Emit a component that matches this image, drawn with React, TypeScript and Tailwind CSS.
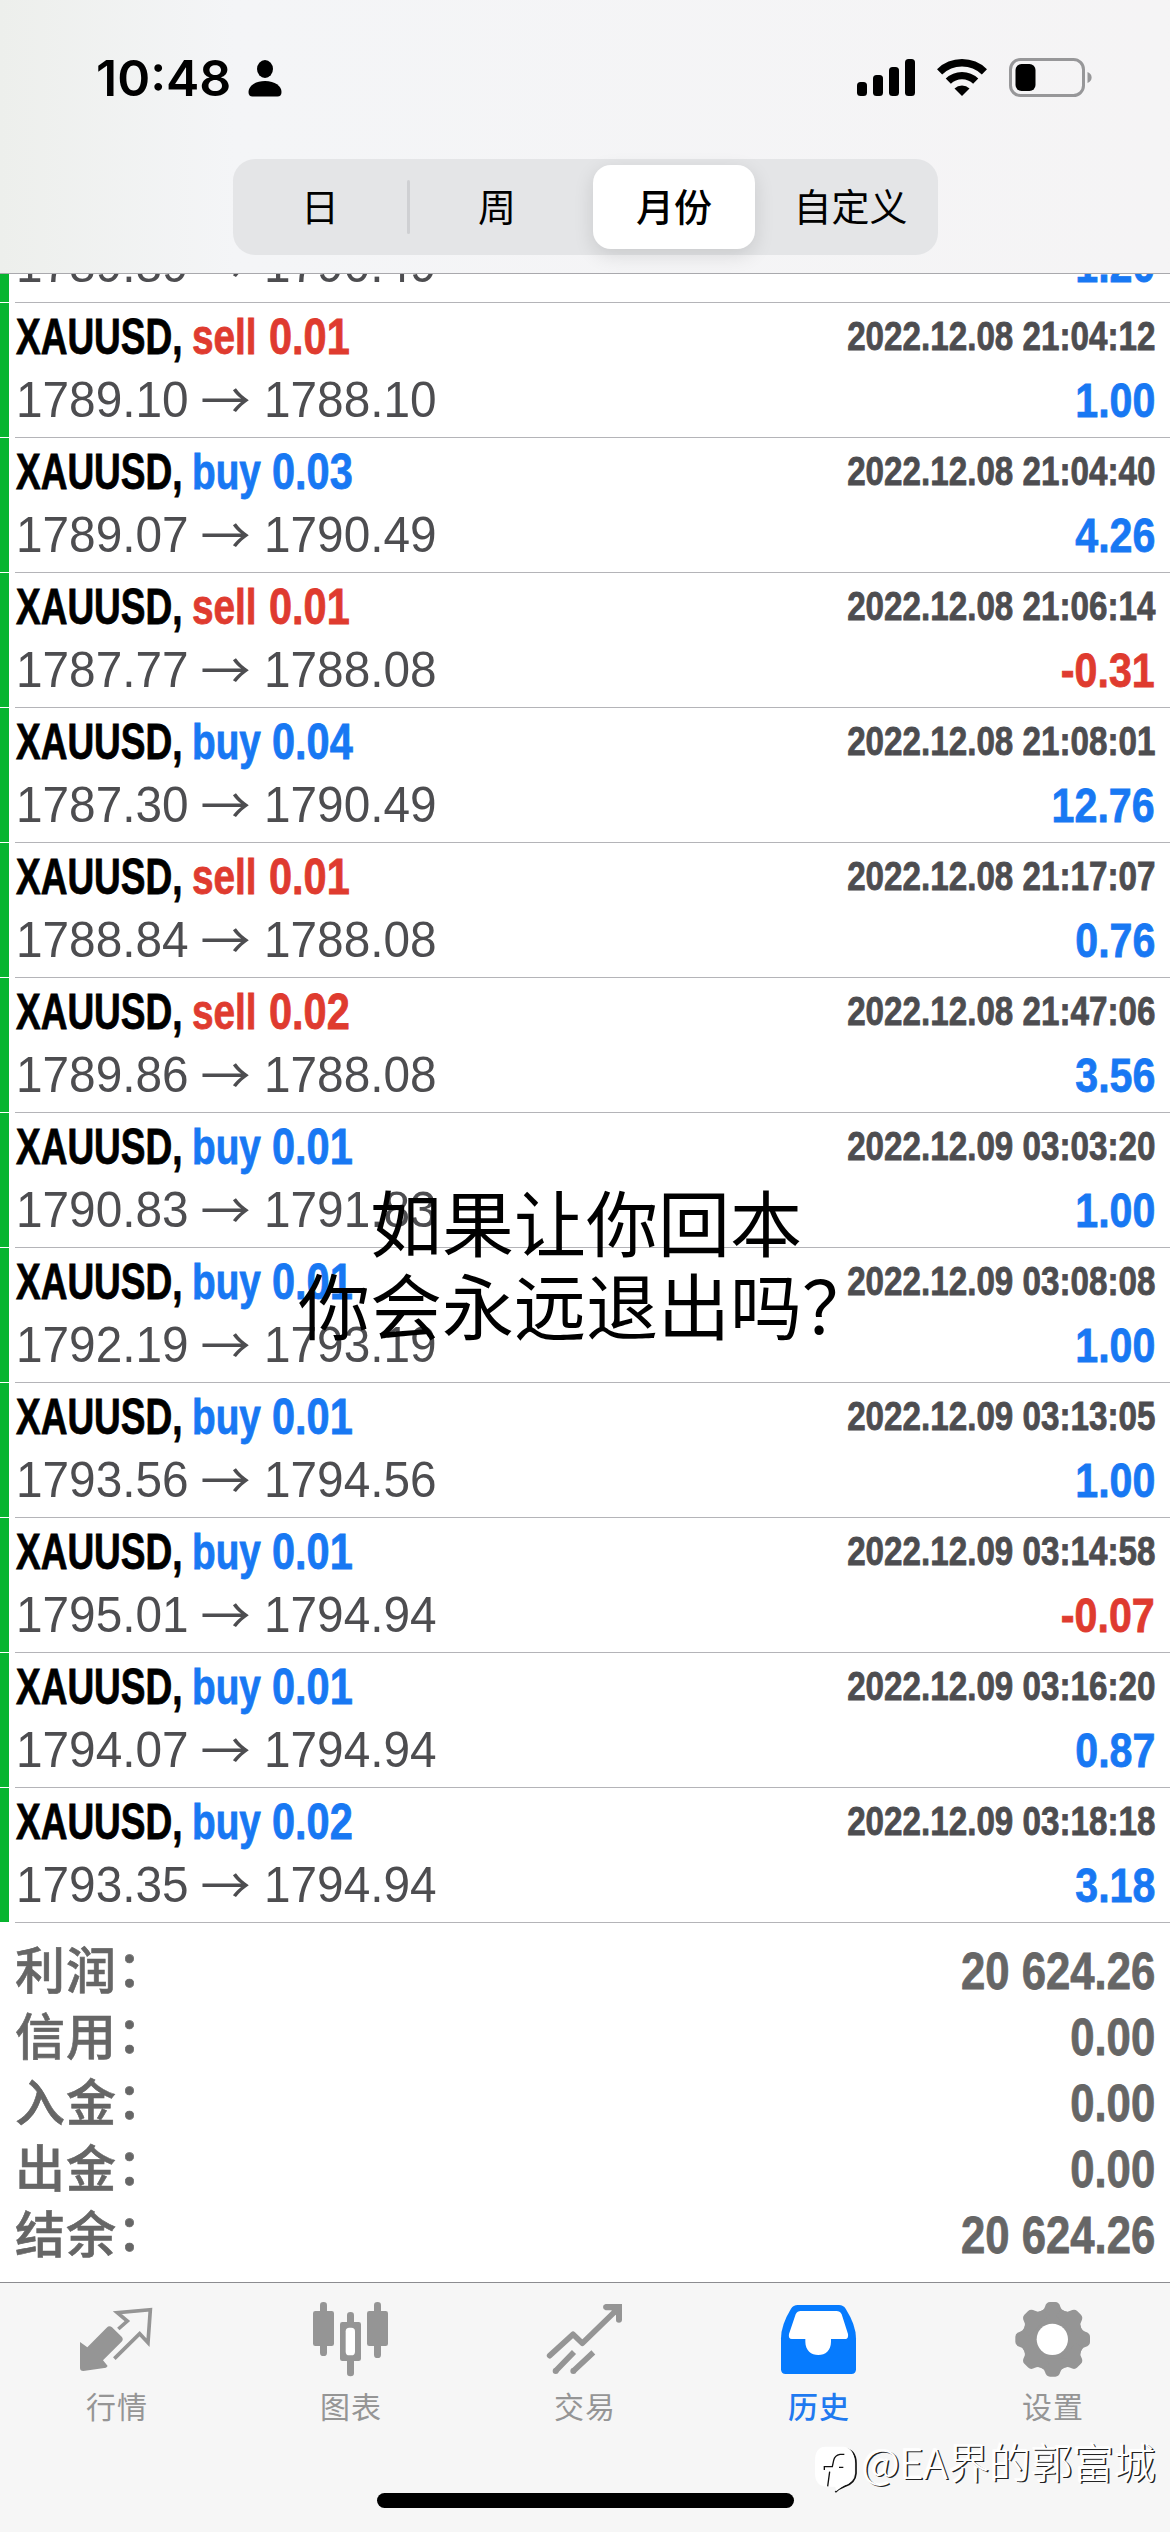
import React from "react";

type Trade = {
  side: "sell" | "buy";
  lot: string;
  from: string;
  to: string;
  time: string;
  profit: string;
};

const trades: Trade[] = [
  { side: "sell", lot: "0.01", from: "1789.10", to: "1788.10", time: "2022.12.08 21:04:12", profit: "1.00" },
  { side: "buy", lot: "0.03", from: "1789.07", to: "1790.49", time: "2022.12.08 21:04:40", profit: "4.26" },
  { side: "sell", lot: "0.01", from: "1787.77", to: "1788.08", time: "2022.12.08 21:06:14", profit: "-0.31" },
  { side: "buy", lot: "0.04", from: "1787.30", to: "1790.49", time: "2022.12.08 21:08:01", profit: "12.76" },
  { side: "sell", lot: "0.01", from: "1788.84", to: "1788.08", time: "2022.12.08 21:17:07", profit: "0.76" },
  { side: "sell", lot: "0.02", from: "1789.86", to: "1788.08", time: "2022.12.08 21:47:06", profit: "3.56" },
  { side: "buy", lot: "0.01", from: "1790.83", to: "1791.83", time: "2022.12.09 03:03:20", profit: "1.00" },
  { side: "buy", lot: "0.01", from: "1792.19", to: "1793.19", time: "2022.12.09 03:08:08", profit: "1.00" },
  { side: "buy", lot: "0.01", from: "1793.56", to: "1794.56", time: "2022.12.09 03:13:05", profit: "1.00" },
  { side: "buy", lot: "0.01", from: "1795.01", to: "1794.94", time: "2022.12.09 03:14:58", profit: "-0.07" },
  { side: "buy", lot: "0.01", from: "1794.07", to: "1794.94", time: "2022.12.09 03:16:20", profit: "0.87" },
  { side: "buy", lot: "0.02", from: "1793.35", to: "1794.94", time: "2022.12.09 03:18:18", profit: "3.18" },
];

const totals = [
  ["利润", "20 624.26"],
  ["信用", "0.00"],
  ["入金", "0.00"],
  ["出金", "0.00"],
  ["结余", "20 624.26"],
];

function PriceLine({ from, to, profit }: { from: string; to: string; profit: string }) {
  return (
    <div className="flex h-[58px] whitespace-nowrap pl-[16px] pr-[15px] leading-[58px]">
      <span className="w-[180px] origin-left scale-x-[0.955] text-[50px] text-[#4d4d50]">{from}</span>
      <span className="flex w-[68px] justify-center pr-[9px] font-['Noto_Sans_CJK_SC',sans-serif] text-[50px] leading-[53px] text-[#4d4d50]">→</span>
      <span className="origin-left scale-x-[0.955] text-[50px] text-[#4d4d50]">{to}</span>
      <span
        className={
          "ml-auto origin-right scale-x-[0.84] text-[49px] font-bold [-webkit-text-stroke:0.8px] " +
          (profit.startsWith("-") ? "text-[#df3b2f]" : "text-[#1878f3]")
        }
      >
        {profit}
      </span>
    </div>
  );
}

function TradeRow({ t }: { t: Trade }) {
  const color = t.side === "sell" ? "text-[#df3b2f]" : "text-[#1878f3]";
  return (
    <div className="flex h-[135px] shrink-0">
      <div className="mt-px w-[9px] bg-[#07b52f]" />
      <div className="-ml-[9px] flex-1">
        <div className="ml-[15px] h-px bg-[#b4b4b8]" />
        <div className="flex h-[68px] whitespace-nowrap pl-[16px] pr-[15px] font-bold [-webkit-text-stroke:0.8px]">
          <span className="w-[176px] origin-left scale-x-[0.74] text-[50px] leading-[68px] text-black">XAUUSD,</span>
          <span className={"origin-left scale-x-[0.775] text-[50px] leading-[68px] " + color + (t.side === "sell" ? " w-[77px]" : " w-[80px]")}>
            {t.side}
          </span>
          <span className={"origin-left scale-x-[0.83] text-[50px] leading-[68px] " + color}>{t.lot}</span>
          <span className="ml-auto origin-right scale-x-[0.83] text-[40px] leading-[66px] text-[#4d4d50]">{t.time}</span>
        </div>
        <PriceLine from={t.from} to={t.to} profit={t.profit} />
      </div>
    </div>
  );
}

function StatusBar() {
  return (
    <div className="flex h-[159px] items-start pl-[96px] pr-[76px] pt-[58px]">
      <span className="mt-px font-['Inter',sans-serif] text-[50px] font-semibold leading-[38px] text-black">10:48</span>
      <svg className="ml-[17px] mt-[2px]" width="34" height="37" viewBox="0 0 34 37">
        <ellipse cx="17" cy="9" rx="8" ry="9" />
        <path d="M0.5 32C0.5 26 7 21 17 21S33.500 26 33.500 32C33.500 35 32 36.500 29.500 36.500H4.500C2 36.500 0.500 35 0.500 32Z" />
      </svg>
      <div className="ml-auto flex items-start">
        <svg className="mt-px" width="60" height="38" viewBox="0 0 60 38">
          <rect x="1" y="23" width="10" height="14" rx="3.500" />
          <rect x="17" y="16" width="10" height="21" rx="3.500" />
          <rect x="33" y="8" width="10" height="29" rx="3.500" />
          <rect x="49" y="0" width="10" height="37" rx="3.500" />
        </svg>
        <svg className="ml-[21px] mt-px" width="50" height="38" viewBox="0 0 50 38">
          <path d="M2.600 12.800A32.300 32.300 0 0 1 47.400 12.800" fill="none" stroke="#000" strokeWidth="7.400" />
          <path d="M11.300 22.200A19.700 19.700 0 0 1 38.700 22.200" fill="none" stroke="#000" strokeWidth="7.400" />
          <path d="M25 37L17.500 29.500A10.700 10.700 0 0 1 32.500 29.500Z" />
        </svg>
        <svg className="ml-[22px]" width="85" height="39" viewBox="0 0 85 39">
          <rect x="1.500" y="1.500" width="73" height="36" rx="10" fill="none" stroke="#979799" strokeWidth="3" />
          <rect x="6.500" y="6" width="20" height="27" rx="6" />
          <path d="M78.500 14C84 16 84 23 78.500 25Z" fill="#979799" />
        </svg>
      </div>
    </div>
  );
}

function RangePicker() {
  return (
    <div className="ml-[233px] flex h-[96px] w-[705px] rounded-[22px] bg-[#e4e5e7] py-[6px] text-[38px] leading-[80px] text-black">
      <div className="w-[174px] text-center">日</div>
      <div className="my-[15px] w-[3px] rounded bg-[#cfd0d3]" />
      <div className="w-[183px] pr-[9px] text-center">周</div>
      <div className="h-[84px] w-[162px] rounded-[18px] bg-white text-center font-medium shadow-[0_6px_20px_rgba(0,0,0,0.12)]">月份</div>
      <div className="flex-1 pl-[8px] text-center">自定义</div>
    </div>
  );
}

const icons = [
  <svg key="q" width="80" height="80" viewBox="231 90 240 240">
    <path d="M240 216L262 232L320 173Q328 165 336 172L365 200Q372 208 364 216L309 271L323 288L318 293L250 303Q240 303 240 294Z" fill="#959595" />
    <path d="M355 177L382 153L352 128L451 119L444 218L419 191L343 266" fill="none" stroke="#959595" strokeWidth="11" strokeLinejoin="miter" />
  </svg>,
  <svg key="c" width="80" height="80" viewBox="933 90 240 240">
    <g fill="#959595">
      <rect x="960" y="96" width="21" height="162" rx="10" />
      <rect x="939" y="123" width="63" height="105" rx="7" />
      <rect x="1122" y="96" width="21" height="168" rx="10" />
      <rect x="1101" y="123" width="63" height="105" rx="7" />
      <rect x="1041" y="126" width="21" height="193" rx="10" />
      <rect x="1020" y="156" width="63" height="117" rx="7" />
    </g>
    <rect x="1037" y="173" width="28" height="83" rx="11" fill="#fff" />
  </svg>,
  <svg key="t" width="80" height="80" viewBox="285 90 240 240">
    <g fill="none" stroke="#959595" strokeWidth="17" strokeLinejoin="round">
      <path d="M299 257L369 193L397 220L502 118" strokeLinecap="round" />
      <path d="M316 304L372 246M369 304L430 247" />
    </g>
    <circle cx="317" cy="303" r="9" fill="#959595" />
    <circle cx="370" cy="303" r="9" fill="#959595" />
    <path d="M467 102H516V150Q515 158 507 158Q498 158 498 150V136L484 121H467Q459 119 459 111Q459 104 467 102Z" fill="#959595" />
  </svg>,
  <svg key="h" width="80" height="80" viewBox="987 90 240 240">
    <path d="M1043 105H1167Q1180 105 1187 116Q1218 165 1218 205V298Q1218 312 1204 312H1007Q993 312 993 298V205Q993 165 1023 116Q1030 105 1043 105Z" fill="#067bfe" />
    <path d="M1052 123H1159Q1170 123 1175 133L1194 192Q1196 207 1186 207H1143V215C1143 241 1126 255 1105 255S1066 241 1066 215V207H1026Q1014 207 1017 192L1037 133Q1042 123 1052 123Z" fill="#fff" />
  </svg>,
  <svg key="s" width="80" height="80" viewBox="729 90 240 240">
    <g fill="#959595">
      <circle cx="848" cy="208" r="90" />
      {[0, 45, 90, 135, 180, 225, 270, 315].map((a) => (
        <path key={a} transform={`rotate(${a} 848 208)`} d="M805 125Q822 122 825 110Q829 96 840 96H856Q867 96 871 110Q874 122 891 125V150H805Z" />
      ))}
    </g>
    <circle cx="847" cy="208" r="47" fill="#fff" />
  </svg>,
];

const tabLabels = ["行情", "图表", "交易", "历史", "设置"];

function TabBar() {
  return (
    <div className="h-[250px] border-t border-[#8c8c90] bg-[#f6f6f6]">
      <div className="flex">
        {tabLabels.map((label, i) => (
          <div key={label} className="flex w-[234px] flex-col items-center pt-[17px]">
            {icons[i]}
            <span className={"mt-[9px] text-[30px] leading-[32px] tracking-[1px] " + (i === 3 ? "font-medium text-[#1f7af0]" : "text-[#959595]")}>
              {label}
            </span>
          </div>
        ))}
      </div>
      <div className="ml-[377px] mt-[72px] h-[15px] w-[417px] rounded-full bg-black" />
    </div>
  );
}

function Watermark() {
  return (
    <div className="absolute left-[814px] top-[2436px] flex items-start whitespace-nowrap">
      <svg className="mt-[4px]" width="46" height="56" viewBox="132 510 138 168">
        <path d="M170 536H222Q258 540 258 580V610Q256 640 222 650Q205 656 196 667" fill="none" stroke="#111" strokeWidth="5" />
        <path d="M165 530H220Q253 534 253 575V605Q250 640 220 647L198 664L196 650H170Q135 648 135 610V570Q136 532 165 530Z" fill="#fff" />
        <path d="M223 553H210Q194 556 191 571L187 590H163V600M179 605L173 649M207 592H220" fill="none" stroke="#111" strokeWidth="4" />
      </svg>
      <span className="ml-[2px] text-[41.5px] leading-[50px] text-white [text-shadow:1.5px_1px_0_#222,-1px_-1px_1px_#fff]">@EA界的郭富城</span>
    </div>
  );
}

export default function App() {
  return (
    <div className="relative flex h-[2532px] w-[1170px] flex-col overflow-hidden bg-white font-['Liberation_Sans','Noto_Sans_CJK_SC',sans-serif]">
      <header className="h-[274px] shrink-0 border-b border-[#a9a9ad] bg-linear-to-r from-[#edefec] via-[#f4f5f7] via-20% to-[#f5f4f5] font-['Noto_Sans_CJK_SC',sans-serif]">
        <StatusBar />
        <RangePicker />
      </header>
      <main className="flex-1">
        <div className="flex h-[28px] items-end overflow-hidden">
          <div className="h-[28px] w-[9px] bg-[#07b52f]" />
          <div className="-ml-[9px] flex-1 pb-[8px]">
            <PriceLine from="1789.89" to="1790.49" profit="1.20" />
          </div>
        </div>
        {trades.map((t) => (
          <TradeRow key={t.time} t={t} />
        ))}
        <div className="ml-[15px] h-px bg-[#b4b4b8]" />
        <div className="pt-[14px]">
          {totals.map(([label, value]) => (
            <div key={label} className="flex h-[66px] pl-[15px] pr-[15px] text-[#666]">
              <span className="font-['Noto_Sans_CJK_SC',sans-serif] text-[50px] font-medium leading-[61px] tracking-[1px] [-webkit-text-stroke:0.6px]">
                {label}
                <span className="relative -top-[2px]">：</span>
              </span>
              <span className="ml-auto origin-right scale-x-[0.84] text-[52px] font-bold leading-[68px] [-webkit-text-stroke:0.8px]">{value}</span>
            </div>
          ))}
        </div>
      </main>
      <div className="font-['Noto_Sans_CJK_SC',sans-serif]">
        <TabBar />
      </div>
      <div className="absolute left-[298px] top-[1178px] w-[576px] whitespace-nowrap text-center font-['Noto_Sans_CJK_SC',sans-serif] text-[72px] leading-[83px] text-black">
        <div>如果让你回本</div>
        <div>你会永远退出吗？</div>
      </div>
      <div className="font-['Noto_Sans_CJK_SC',sans-serif] font-light">
        <Watermark />
      </div>
    </div>
  );
}
